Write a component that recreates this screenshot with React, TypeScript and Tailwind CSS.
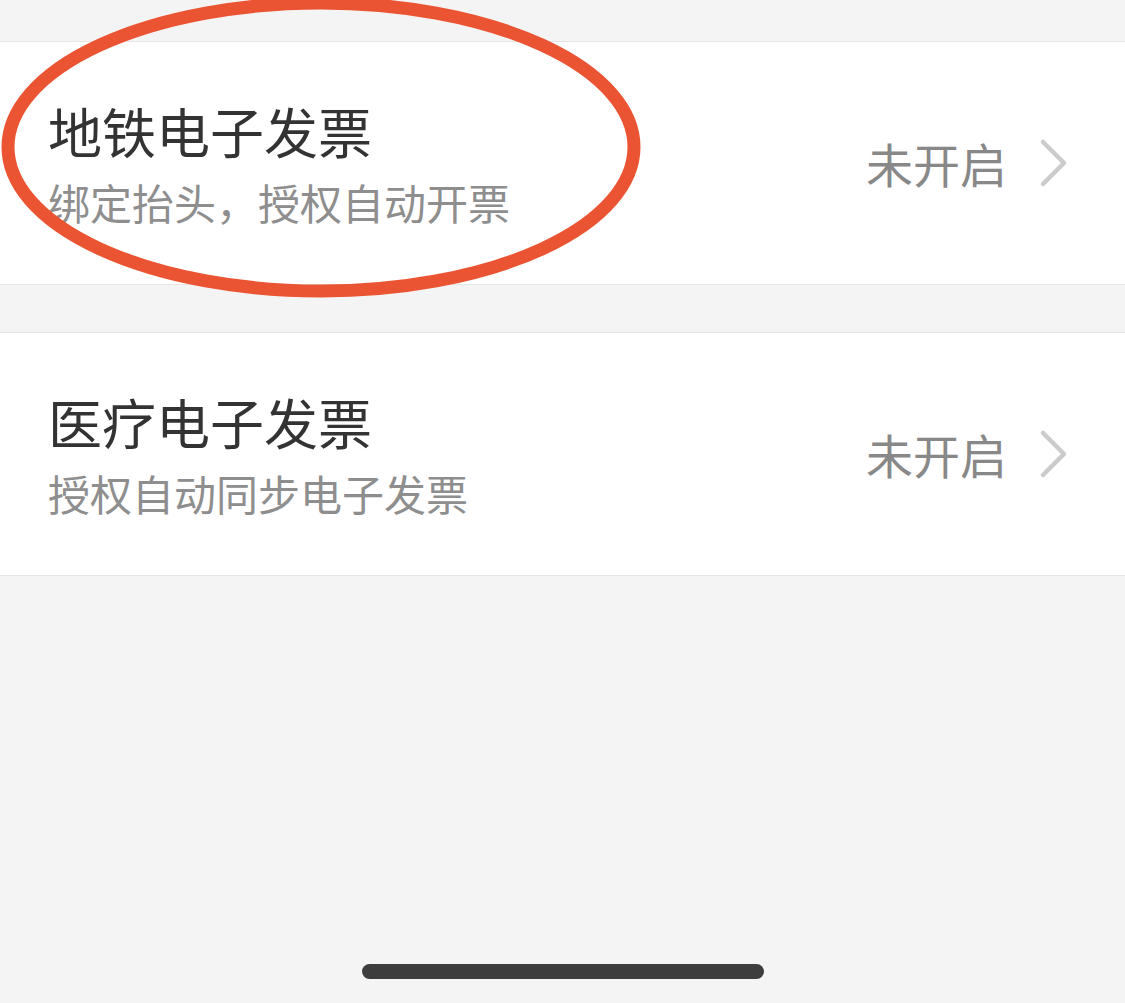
import React from "react";

const font = { fontFamily: '"Noto Sans CJK SC", "Noto Sans", sans-serif' };

function Chevron() {
  return (
    <svg width="30" height="50" viewBox="0 0 30 50" className="ml-[32px]">
      <polyline
        points="4,4 25,25 4,46"
        fill="none"
        stroke="#cbcbcb"
        strokeWidth="4.5"
        strokeLinecap="round"
        strokeLinejoin="round"
      />
    </svg>
  );
}

function Row({ title, sub }: { title: string; sub: string }) {
  return (
    <div className="flex h-[244px] items-center justify-between border-y border-[#e6e6e6] bg-white pl-[48px] pr-[56px]">
      <div className="flex flex-col">
        <div className="text-[54px] leading-[64px] text-[#333333]">{title}</div>
        <div className="mt-[14px] text-[42px] leading-[50px] text-[#8e8e8e]">{sub}</div>
      </div>
      <div className="flex items-center">
        <span className="text-[47px] leading-[56px] text-[#888888]">未开启</span>
        <Chevron />
      </div>
    </div>
  );
}

export default function App() {
  return (
    <div className="relative h-[1003px] w-[1125px] overflow-hidden bg-[#f4f4f4]" style={font}>
      <div className="h-[41px]" />
      <Row title="地铁电子发票" sub="绑定抬头，授权自动开票" />
      <div className="h-[47px]" />
      <Row title="医疗电子发票" sub="授权自动同步电子发票" />
      <div className="absolute left-[362px] top-[964px] h-[15px] w-[402px] rounded-full bg-[#3d3d3d]" />
      <svg
        className="pointer-events-none absolute left-0 top-0"
        width="660"
        height="310"
        viewBox="0 0 660 310"
      >
        <ellipse cx="321" cy="147" rx="313" ry="144" fill="none" stroke="#eb5432" strokeWidth="13" />
      </svg>
    </div>
  );
}
